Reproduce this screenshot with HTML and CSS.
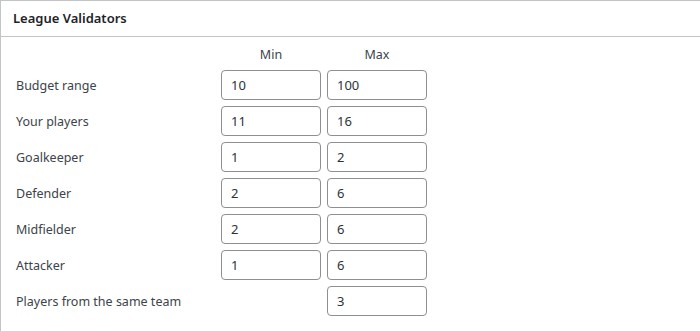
FILE: index.html
```html
<!DOCTYPE html>
<html lang="en">
<head>
    <meta charset="UTF-8">
    <meta name="viewport" content="width=device-width, initial-scale=1.0">
    <title>League Validators</title>
    <link rel="stylesheet" href="styles.css">
</head>
<body>
    <div class="postbox">
        <h2 class="postbox-title">League Validators</h2>
        <div class="validators">
            <span></span>
            <span class="col-head">Min</span>
            <span class="col-head">Max</span>

            <label for="budget-min">Budget range</label>
            <input type="text" id="budget-min" value="10">
            <input type="text" value="100">

            <label for="players-min">Your players</label>
            <input type="text" id="players-min" value="11">
            <input type="text" value="16">

            <label for="gk-min">Goalkeeper</label>
            <input type="text" id="gk-min" value="1">
            <input type="text" value="2">

            <label for="def-min">Defender</label>
            <input type="text" id="def-min" value="2">
            <input type="text" value="6">

            <label for="mid-min">Midfielder</label>
            <input type="text" id="mid-min" value="2">
            <input type="text" value="6">

            <label for="att-min">Attacker</label>
            <input type="text" id="att-min" value="1">
            <input type="text" value="6">

            <label for="same-team">Players from the same team</label>
            <span></span>
            <input type="text" id="same-team" value="3">
        </div>
    </div>
</body>
</html>
```

FILE: styles.css
```css
body {
    margin: 0;
    background: #fff;
    font-family: "Noto Sans", "Open Sans", sans-serif;
    color: #3c434a;
}
.postbox {
    border: 1px solid #c3c4c7;
    border-right: none;
    background: #fff;
}
.postbox-title {
    margin: 0;
    padding: 0 12px;
    height: 35px;
    line-height: 35px;
    font-size: 13px;
    font-weight: 600;
    color: #1d2327;
    border-bottom: 1px solid #c3c4c7;
}
.validators {
    display: grid;
    grid-template-columns: 199px 100px 100px;
    column-gap: 6px;
    row-gap: 6px;
    align-items: center;
    padding: 9px 15px 16px;
}
.col-head {
    text-align: center;
    font-size: 12.5px;
    line-height: 18px;
    color: #3c434a;
}
label {
    font-size: 12.5px;
    color: #3c434a;
}
input {
    box-sizing: border-box;
    width: 100px;
    height: 30px;
    margin: 0;
    padding: 0 9px;
    font-family: inherit;
    font-size: 13px;
    color: #2c3338;
    border: 1px solid #8c8f94;
    border-radius: 4px;
    background: #fff;
}
```
